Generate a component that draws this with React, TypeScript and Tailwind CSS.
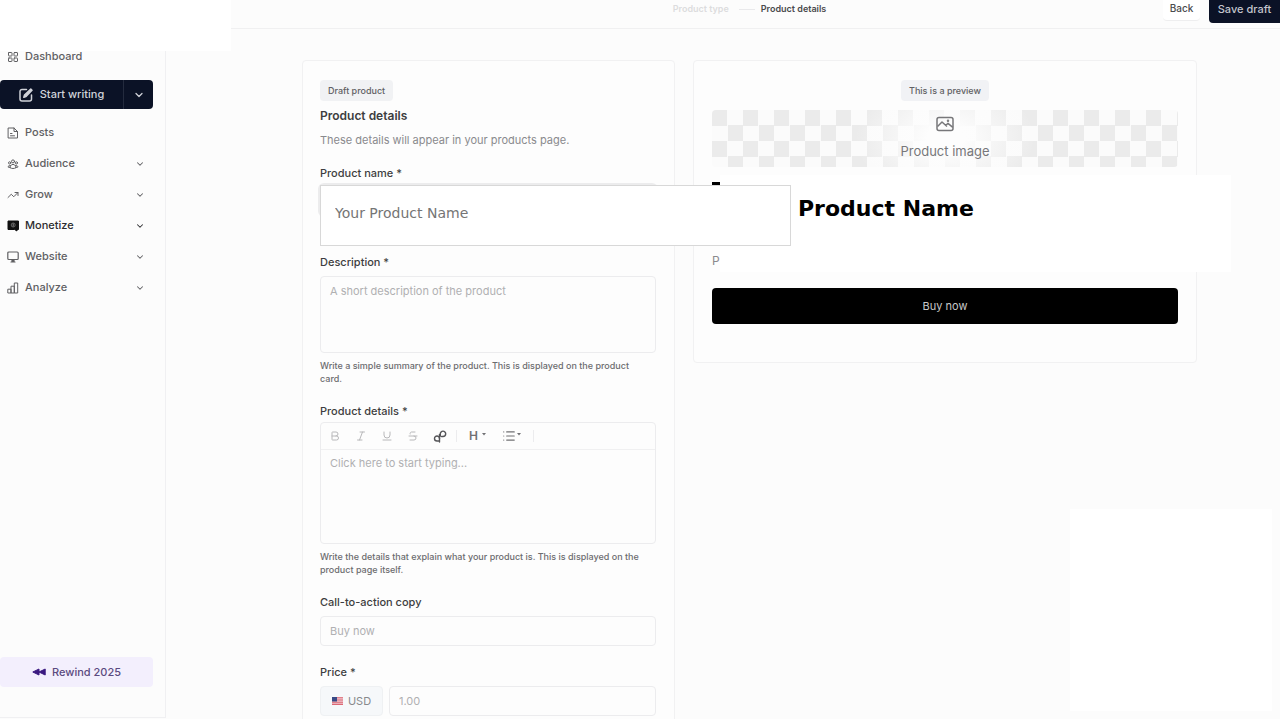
import type { ReactNode } from 'react'
import { Bold, ChevronDown, Italic, LayoutGrid, List, Strikethrough, TrendingUp, Underline } from 'lucide-react'
import { HiOutlineUserGroup } from 'react-icons/hi2'

const labelClass = 'block h-4 text-[11px] leading-4 font-medium text-[#3d3d40]'
const fieldClass =
  'block w-full rounded border border-[#ececee] bg-[#fdfdfd] px-[9px] text-[11px] text-[#3d3d40] placeholder:text-[#b0b0b2] outline-none'
const helpClass = 'mt-[6px] pr-3 text-[9px] leading-[13px] font-medium text-[#6c6c6f]'
const badgeClass = 'flex h-[21px] w-fit shrink-0 items-center rounded px-2 text-[9px] font-medium text-[#606063]'

function PostsIcon() {
  return (
    <svg viewBox="0 0 12 12" className="h-3 w-3" fill="none" stroke="currentColor" strokeLinejoin="round" strokeLinecap="round" aria-hidden="true">
      <path d="M1.500 1h5.500l3.500 3.500V11h-9zM7 1v3.500h3.500M3.500 6.500h1.500M3.500 8.800h4" />
    </svg>
  )
}

function WriteIcon() {
  return (
    <svg viewBox="0 0 14 14" className="h-[14px] w-[14px]" fill="none" stroke="currentColor" strokeWidth="1.500" strokeLinecap="round" strokeLinejoin="round" aria-hidden="true">
      <path d="M7.500 1.500H3a2 2 0 0 0-2 2v7.500a2 2 0 0 0 2 2h7.500a2 2 0 0 0 2-2V7" />
      <path d="M11.800 1 13 2.200 7 8.500l-2.200.7.700-2.200z" fill="currentColor" />
    </svg>
  )
}

function MonetizeIcon() {
  return (
    <svg viewBox="0 0 12 12" className="h-3 w-3" aria-hidden="true">
      <path d="M1 1h10.500v8.500H10V11L7.500 9.500H1z" fill="#111" stroke="#111" strokeLinejoin="round" />
      <circle cx="6.2" cy="5" r="2" fill="none" stroke="#777" strokeWidth="0.8" />
      <path d="M6.200 3.500v3" stroke="#aaa" strokeWidth="0.8" />
    </svg>
  )
}

function WebsiteIcon() {
  return (
    <svg viewBox="0 0 12 12" className="h-3 w-3" fill="none" stroke="currentColor" strokeWidth="1.200" strokeLinejoin="round" strokeLinecap="round" aria-hidden="true">
      <rect x="0.8" y="1" width="10.400" height="7.500" rx="1" />
      <path d="M5 8.800h2V11H5zM4 11h4" fill="currentColor" />
    </svg>
  )
}

function AnalyzeIcon() {
  return (
    <svg viewBox="0 0 12 12" className="h-3 w-3" fill="none" stroke="currentColor" strokeLinejoin="round" aria-hidden="true">
      <path d="M.8 7.200H4V11H.8zM4 4.200h3.300V11H4zM7.300 1h3.400v10H7.300z" />
    </svg>
  )
}

function LinkIcon() {
  return (
    <svg viewBox="0 0 14 13" className="h-[13px] w-[14px]" fill="none" stroke="#555558" strokeWidth="1.400" strokeLinecap="round" aria-hidden="true">
      <path d="M6.500 12V8.500A2.500 2.500 0 1 0 4 11h1.500" />
      <path d="M6.500 8.500V4.500" />
      <path d="M8.500 6.500H10A2.700 2.700 0 1 0 7.300 3.800V6" />
    </svg>
  )
}

function ImageIcon() {
  return (
    <svg viewBox="0 0 18 16" className="h-4 w-[18px]" fill="none" stroke="#77777a" strokeWidth="1.500" strokeLinejoin="round" aria-hidden="true">
      <rect x="1" y="1.500" width="16" height="13" rx="2" />
      <path d="M1.500 10.500 6 6l5 4.500M9.800 9.300 12 7.300l4.800 4" />
      <circle cx="12" cy="4.800" r="0.500" />
    </svg>
  )
}

function FlagIcon() {
  return (
    <svg viewBox="0 0 11 8" className="h-2 w-[11px]" aria-hidden="true">
      <rect width="11" height="8" rx="1" fill="#f0c9d0" />
      <path d="M0 .7h11M0 3h11M0 5.200h11M0 7.400h11" stroke="#dc6874" strokeWidth="1.100" />
      <rect width="5" height="4.500" fill="#3a4a86" />
    </svg>
  )
}

function Caret() {
  return (
    <svg viewBox="0 0 4 3" className="mb-1 h-[3px] w-1" aria-hidden="true">
      <path d="M0 0h4L2 2.500z" fill="#707073" />
    </svg>
  )
}

const navItems: { label: string; icon: ReactNode; active?: boolean; expandable: boolean }[] = [
  { label: 'Posts', icon: <PostsIcon />, expandable: false },
  { label: 'Audience', icon: <HiOutlineUserGroup size={12} strokeWidth={2} />, expandable: true },
  { label: 'Grow', icon: <TrendingUp size={12} />, expandable: true },
  { label: 'Monetize', icon: <MonetizeIcon />, active: true, expandable: true },
  { label: 'Website', icon: <WebsiteIcon />, expandable: true },
  { label: 'Analyze', icon: <AnalyzeIcon />, expandable: true },
]

function Header() {
  return (
    <header className="flex h-[29px] shrink-0 border-b border-[#f0f0f1]">
      <div className="z-10 h-[51px] w-[231px] shrink-0 bg-white" />
      <div className="flex-1" />
      <nav className="flex h-[18px] items-center gap-[10px] pr-3 text-[9px] font-semibold" aria-label="Steps">
        <a href="#type" className="text-[#dcdcde]">Product type</a>
        <div className="-mr-1 h-px w-4 bg-[#e9e9eb]" />
        <a href="#details" className="text-[#4a4a4d]">Product details</a>
      </nav>
      <div className="flex flex-1 items-start justify-end gap-[9px]">
        <button className="h-[21px] w-[37px] rounded-b border-b border-[#eeeeef] bg-white pb-1 text-[10px] font-medium text-[#4a4a4d]">
          Back
        </button>
        <button className="h-[23px] w-[71px] rounded-bl bg-[#0b1226] pb-[5px] text-[11px] font-medium whitespace-nowrap text-[#c4c6cd]">
          Save draft
        </button>
      </div>
    </header>
  )
}

function Sidebar() {
  return (
    <aside className="mb-px flex w-[166px] shrink-0 flex-col border-r border-b border-[#f0f0f2] pt-3 pr-3 text-[11px] font-medium text-[#606063]">
      <a href="#dashboard" className="flex h-[31px] items-center gap-[6px] pl-[7px]">
        <LayoutGrid size={12} />
        Dashboard
      </a>
      <div className="mt-2 flex h-[29px] rounded bg-[#0b1226] text-[#d0d2d9]">
        <button className="flex flex-1 items-center justify-center gap-[7px] border-r border-[#242b3e]">
          <WriteIcon />
          Start writing
        </button>
        <button className="flex w-[29px] items-center justify-center" aria-label="More writing options">
          <ChevronDown size={12} strokeWidth={2.5} />
        </button>
      </div>
      <nav className="mt-2">
        {navItems.map((item) => (
          <a
            key={item.label}
            href={`#${item.label.toLowerCase()}`}
            className={`flex h-[31px] items-center gap-[6px] pr-2 pl-[7px] ${item.active ? 'text-[#2c2c2f]' : ''}`}
          >
            {item.icon}
            <span className="flex-1">{item.label}</span>
            {item.expandable && <ChevronDown size={10} strokeWidth={2.5} />}
          </a>
        ))}
      </nav>
      <button className="mt-auto mb-[30px] flex h-[30px] items-center justify-center gap-[6px] rounded bg-[#f3effd] text-[#5b4a80]">
        <svg viewBox="0 0 14 8" className="h-2 w-[14px]" fill="#3b1a80" stroke="#3b1a80" strokeLinejoin="round" aria-hidden="true">
          <path d="M7 1v6L.8 4zM13.200 1v6L7 4z" />
        </svg>
        Rewind 2025
      </button>
    </aside>
  )
}

function Toolbar() {
  return (
    <div className="flex h-[27px] items-center border-b border-[#f0f0f1] pl-2 text-[#b8b8ba]">
      <div className="flex gap-[14px]">
        <button type="button" aria-label="Bold"><Bold size={12} /></button>
        <button type="button" aria-label="Italic"><Italic size={12} /></button>
        <button type="button" aria-label="Underline"><Underline size={12} /></button>
        <button type="button" aria-label="Strikethrough"><Strikethrough size={12} /></button>
        <button type="button" aria-label="Link"><LinkIcon /></button>
      </div>
      <div className="ml-[9px] h-3 w-px bg-[#ececee]" />
      <button type="button" className="ml-3 flex items-center gap-1 text-[12px] leading-4 font-semibold text-[#707073]" aria-label="Heading">
        H
        <Caret />
      </button>
      <button type="button" className="ml-4 flex items-center gap-px text-[#707073]" aria-label="List">
        <List size={14} />
        <Caret />
      </button>
      <div className="ml-3 h-3 w-px bg-[#ececee]" />
    </div>
  )
}

function ProductForm() {
  return (
    <form className="rounded border border-[#f1f1f2] bg-[#fdfdfd] pt-[19px] pr-[18px] pb-10 pl-[17px]">
      <div className={`bg-[#f1f2f4] ${badgeClass}`}>Draft product</div>
      <h1 className="mt-[5px] text-[12px] leading-5 font-semibold text-[#3d3d40]">Product details</h1>
      <p className="mt-1 text-[11px] leading-5 text-[#8a8a8d]">These details will appear in your products page.</p>

      <label htmlFor="name" className={`mt-[15px] ${labelClass}`}>Product name *</label>
      <div className="relative mt-1 h-[30px] rounded shadow-[0_0_0_2px_#ececed]">
        <input
          id="name"
          placeholder="Your Product Name"
          className="absolute top-0 left-0 z-20 h-[61px] w-[471px] border border-[#d8d8d8] bg-white px-[14px] pb-[5px] font-['DejaVu_Sans',sans-serif] text-[14px] text-black outline-none placeholder:text-[#757575]"
        />
      </div>

      <label htmlFor="description" className={`mt-[39px] ${labelClass}`}>Description *</label>
      <textarea
        id="description"
        placeholder="A short description of the product"
        className={`mt-[6px] h-[77px] resize-none py-[6px] leading-4 ${fieldClass}`}
      />
      <p className={helpClass}>Write a simple summary of the product. This is displayed on the product card.</p>

      <label htmlFor="details" className={`mt-[18px] ${labelClass}`}>Product details *</label>
      <div className="mt-[3px] h-[122px] rounded border border-[#ececee]">
        <Toolbar />
        <textarea
          id="details"
          placeholder="Click here to start typing..."
          className="block h-[90px] w-full resize-none px-[9px] py-[5px] text-[11px] leading-4 outline-none placeholder:text-[#b0b0b2]"
        />
      </div>
      <p className={helpClass}>
        Write the details that explain what your product is. This is displayed on the product page itself.
      </p>

      <label htmlFor="cta" className={`mt-[18px] ${labelClass}`}>Call-to-action copy</label>
      <input id="cta" placeholder="Buy now" className={`mt-[6px] h-[30px] ${fieldClass}`} />

      <label htmlFor="price" className={`mt-[18px] ${labelClass}`}>Price *</label>
      <div className="mt-[6px] flex gap-[6px]">
        <button
          type="button"
          className="flex h-[30px] w-[63px] shrink-0 items-center justify-center gap-[5px] rounded border border-[#eff1f3] bg-[#f6f8fa] text-[11px] text-[#88898c]"
        >
          <FlagIcon />
          USD
        </button>
        <input id="price" placeholder="1.00" className={`h-[30px] ${fieldClass}`} />
      </div>
    </form>
  )
}

function Preview() {
  return (
    <section className="relative flex h-[303px] flex-col items-center rounded border border-[#f1f1f2] bg-[#fdfdfd] px-[18px] pt-[19px]">
      <div className={`bg-[#f1f2f5] ${badgeClass}`}>This is a preview</div>
      <div className="mt-[9px] h-[57px] w-full shrink-0 rounded bg-[repeating-conic-gradient(#fbfbfb_0_25%,#ebebeb_0_50%)] bg-[length:31px_31px]">
        <div className="flex h-full flex-col items-center bg-[radial-gradient(ellipse_90px_60px,#fdfdfd_20%,transparent)] pt-[6px]">
          <ImageIcon />
          <p className="mt-[9px] text-[13px] leading-5 text-[#77777a]">Product image</p>
        </div>
      </div>
      <div className="mt-[15px] h-[3px] w-2 self-start bg-black" />
      <p className="mt-[68px] self-start text-[12px] leading-4 text-[#8a8a8d]">P</p>
      <button className="mt-auto mb-[38px] h-[36px] w-full shrink-0 rounded bg-black text-[11px] text-[#c8c8c8]">
        Buy now
      </button>
      <div className="absolute top-[114px] -right-[35px] left-[26px] z-10 h-[97px] bg-white pt-[18px] pl-[78px]">
        <h2 className="font-['DejaVu_Sans',sans-serif] text-[22px] leading-8 font-bold whitespace-nowrap text-black">
          Product Name
        </h2>
      </div>
    </section>
  )
}

export default function App() {
  return (
    <div className="relative flex h-screen flex-col overflow-hidden bg-[#fcfcfc] font-['Inter',sans-serif]">
      <Header />
      <div className="flex min-h-0 flex-1">
        <Sidebar />
        <main className="grid flex-1 grid-cols-[minmax(0,373fr)_minmax(0,504fr)] items-start gap-[18px] pt-[31px] pr-[83px] pl-[136px]">
          <ProductForm />
          <Preview />
        </main>
      </div>
      <div className="absolute right-2 bottom-2 h-[202px] w-[202px] bg-white" />
    </div>
  )
}
